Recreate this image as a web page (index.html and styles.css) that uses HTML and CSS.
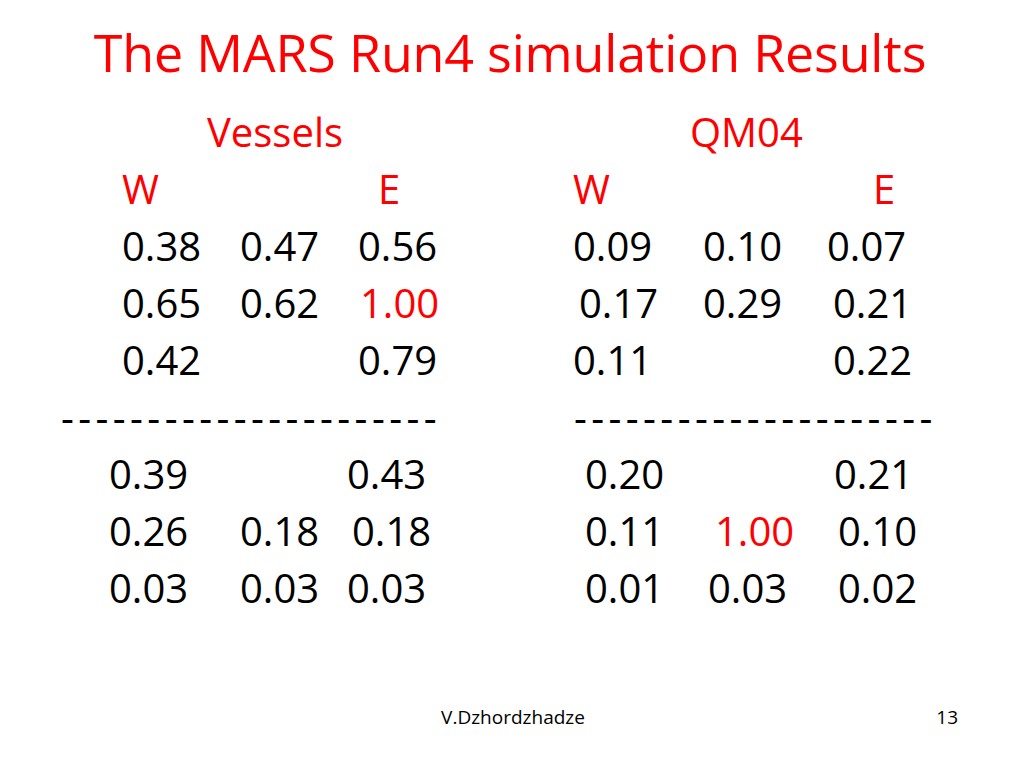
FILE: index.html
```html
<!DOCTYPE html>
<html lang="en">
<head>
<meta charset="utf-8">
<title>The MARS Run4 simulation Results</title>
<link rel="stylesheet" href="styles.css">
</head>
<body>
<main class="slide">
  <h1 class="title">The MARS Run4 simulation Results</h1>
  <section class="tables">
    <div class="block">
      <div class="head head-vessels red">Vessels</div>
      <div class="row grid-lu"><span class="red">W</span><span class="c3 red dx20">E</span></div>
      <div class="row grid-lu"><span>0.38</span><span>0.47</span><span>0.56</span></div>
      <div class="row grid-lu"><span>0.65</span><span>0.62</span><span class="red dx2">1.00</span></div>
      <div class="row grid-lu"><span>0.42</span><span class="c3">0.79</span></div>
      <div class="row dashes dash-l">----------------------</div>
      <div class="row grid-ll"><span>0.39</span><span class="c3">0.43</span></div>
      <div class="row grid-ll"><span>0.26</span><span>0.18</span><span class="dx5">0.18</span></div>
      <div class="row grid-ll"><span>0.03</span><span>0.03</span><span>0.03</span></div>
    </div>
    <div class="block">
      <div class="head head-qm red">QM04</div>
      <div class="row grid-ru"><span class="red">W</span><span class="c3 red dx46">E</span></div>
      <div class="row grid-ru"><span>0.09</span><span>0.10</span><span>0.07</span></div>
      <div class="row grid-ru"><span class="dx6">0.17</span><span>0.29</span><span class="dx6">0.21</span></div>
      <div class="row grid-ru"><span>0.11</span><span class="c3 dx6">0.22</span></div>
      <div class="row dashes dash-r">---------------------</div>
      <div class="row grid-rl"><span>0.20</span><span class="c3 dxn4">0.21</span></div>
      <div class="row grid-rl"><span>0.11</span><span class="red dx7">1.00</span><span>0.10</span></div>
      <div class="row grid-rl"><span>0.01</span><span>0.03</span><span>0.02</span></div>
    </div>
  </section>
  <footer class="footer">
    <span class="footer-spacer"></span>
    <span class="author">V.Dzhordzhadze</span>
    <span class="page-no">13</span>
  </footer>
</main>
</body>
</html>
```

FILE: styles.css
```css
html, body {
  margin: 0;
  padding: 0;
  background: #ffffff;
}

.slide {
  width: 1024px;
  height: 768px;
  display: flex;
  flex-direction: column;
  font-family: "Open Sans", "DejaVu Sans", sans-serif;
  color: #000000;
  overflow: hidden;
}

.red {
  color: #ff0000;
}

.title {
  margin: 12px 0 0 0;
  padding-right: 4px;
  font-size: 52px;
  letter-spacing: -0.2px;
  line-height: 79px;
  font-weight: 400;
  color: #ff0000;
  text-align: center;
}

.tables {
  margin-top: 12px;
  display: grid;
  grid-template-columns: 500px 1fr;
  padding-left: 60px;
}

.block {
  display: flex;
  flex-direction: column;
}

.row,
.head {
  font-size: 40px;
  line-height: 57px;
  height: 57px;
  white-space: nowrap;
}

.head-vessels {
  padding-left: 147px;
}

.head-qm {
  padding-left: 130px;
}

.grid-lu,
.grid-ll,
.grid-ru,
.grid-rl {
  display: grid;
}

.grid-lu {
  padding-left: 62px;
  grid-template-columns: 118px 118px auto;
}

.grid-ll {
  padding-left: 49px;
  grid-template-columns: 131px 107px auto;
}

.grid-ru {
  padding-left: 13px;
  grid-template-columns: 130px 124px auto;
}

.grid-rl {
  padding-left: 25px;
  grid-template-columns: 123px 130px auto;
}

.c3 {
  grid-column: 3;
}

.dx2 { padding-left: 2px; }
.dx5 { padding-left: 5px; }
.dx6 { padding-left: 6px; }
.dx7 { padding-left: 7px; }
.dx20 { padding-left: 20px; }
.dx46 { padding-left: 46px; }
.dxn4 { margin-left: -4px; }

.dashes {
  letter-spacing: 4.4px;
}

.dash-l {
  padding-left: 1px;
}

.dash-r {
  padding-left: 14px;
}

.footer {
  margin-top: auto;
  margin-bottom: 39px;
  display: grid;
  grid-template-columns: 1fr auto 1fr;
  font-size: 19px;
  line-height: 24px;
}

.author {
  padding-left: 2px;
}

.page-no {
  text-align: right;
  padding-right: 66px;
}
```
